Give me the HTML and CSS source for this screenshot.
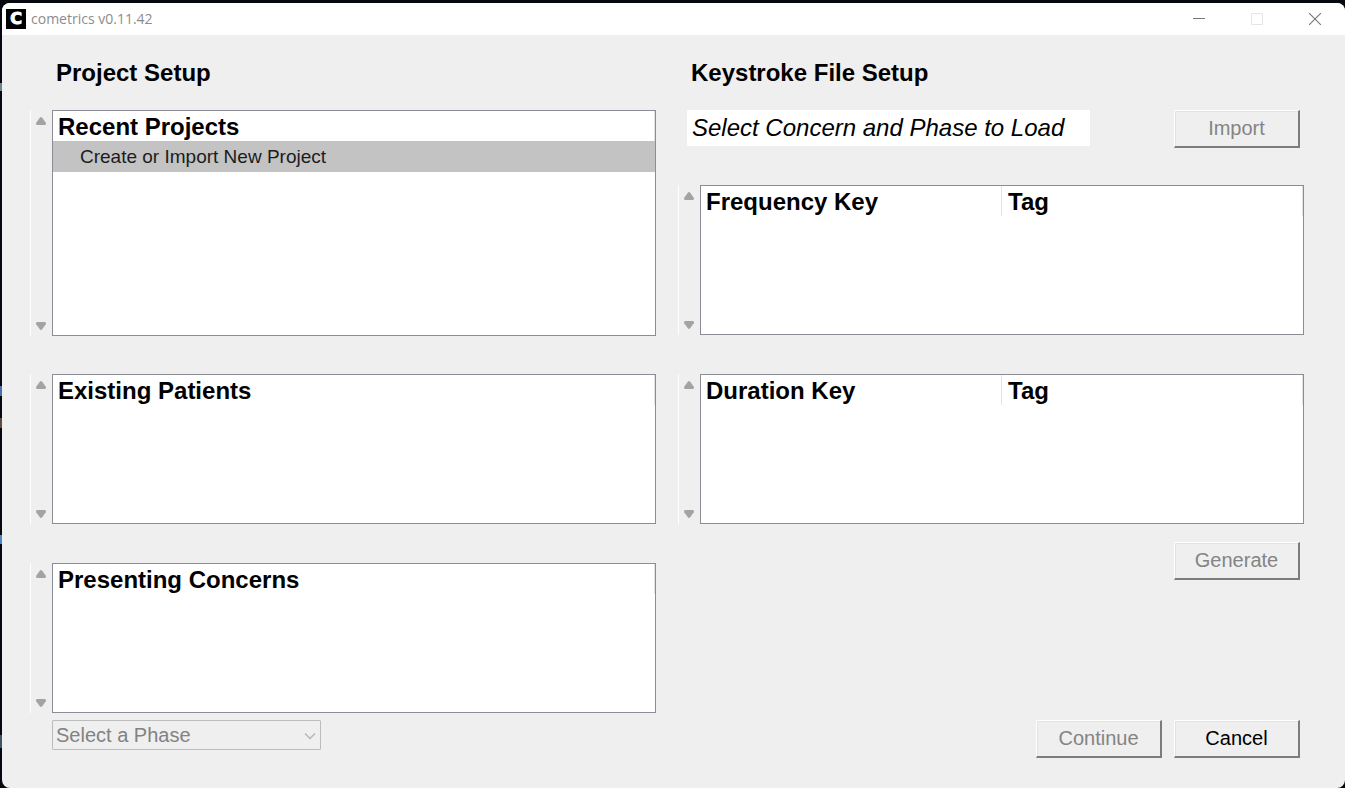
FILE: index.html
```html
<!DOCTYPE html>
<html lang="en">
<head>
<meta charset="utf-8">
<title>cometrics v0.11.42</title>
<link rel="stylesheet" href="styles.css">
</head>
<body>
<svg class="defs" aria-hidden="true">
  <symbol id="up" viewBox="0 0 10 8"><path d="M4 .5Q5-.4 6 .5L9.8 5.8Q10.4 8 8.500 8H1.500Q-.4 8 .2 5.800Z" fill="#a3a3a3"/></symbol>
  <symbol id="down" viewBox="0 0 10 8"><path d="M4 7.500Q5 8.400 6 7.500L9.800 2.200Q10.400 0 8.500 0H1.500Q-.4 0 .2 2.200Z" fill="#a3a3a3"/></symbol>
</svg>
<div class="window">
  <header class="titlebar">
    <span class="logo" aria-hidden="true">C</span>
    <span class="title">cometrics v0.11.42</span>
    <div class="controls">
      <button type="button" aria-label="Minimize"><svg width="12" height="12" viewBox="0 0 12 12"><path d="M0 5.500H12" stroke="#777"/></svg></button>
      <button type="button" aria-label="Maximize" disabled><svg width="12" height="12" viewBox="0 0 12 12"><path d="M.5.500H11.500V11.500H.5Z" fill="none" stroke="#e6e6e6"/></svg></button>
      <button type="button" aria-label="Close"><svg width="12" height="12" viewBox="0 0 12 12"><path d="M0 0L12 12M12 0L0 12" stroke="#777" stroke-width="1.100"/></svg></button>
    </div>
  </header>
  <main class="content">
    <section class="column">
      <h1 class="heading">Project Setup</h1>
      <div class="list list-tall">
        <div class="scroll"><button type="button" aria-label="Scroll projects up"><svg><use href="#up"/></svg></button><button type="button" aria-label="Scroll projects down"><svg><use href="#down"/></svg></button></div>
        <div class="box"><table>
          <thead><tr><th>Recent Projects</th></tr></thead>
          <tbody><tr class="selected"><td>Create or Import New Project</td></tr></tbody>
        </table></div>
      </div>
      <div class="list">
        <div class="scroll"><button type="button" aria-label="Scroll patients up"><svg><use href="#up"/></svg></button><button type="button" aria-label="Scroll patients down"><svg><use href="#down"/></svg></button></div>
        <div class="box"><table><thead><tr><th>Existing Patients</th></tr></thead></table></div>
      </div>
      <div class="list">
        <div class="scroll"><button type="button" aria-label="Scroll concerns up"><svg><use href="#up"/></svg></button><button type="button" aria-label="Scroll concerns down"><svg><use href="#down"/></svg></button></div>
        <div class="box"><table><thead><tr><th>Presenting Concerns</th></tr></thead></table></div>
      </div>
      <div class="phase">
        <select aria-label="Phase" disabled><option>Select a Phase</option></select>
        <svg class="chevron" width="12" height="8" viewBox="0 0 12 8" aria-hidden="true"><path d="M1 1.500L6 6.500L11 1.500" fill="none" stroke="#b4b4b4" stroke-width="1.300"/></svg>
      </div>
    </section>
    <section class="column">
      <h1 class="heading heading-right">Keystroke File Setup</h1>
      <div class="file">
        <input type="text" aria-label="Keystroke file" value="Select Concern and Phase to Load" readonly>
        <button type="button" class="btn" disabled>Import</button>
      </div>
      <div class="list">
        <div class="scroll"><button type="button" aria-label="Scroll frequency keys up"><svg><use href="#up"/></svg></button><button type="button" aria-label="Scroll frequency keys down"><svg><use href="#down"/></svg></button></div>
        <div class="box"><table><thead><tr><th>Frequency Key</th><th>Tag</th></tr></thead></table></div>
      </div>
      <div class="list">
        <div class="scroll"><button type="button" aria-label="Scroll duration keys up"><svg><use href="#up"/></svg></button><button type="button" aria-label="Scroll duration keys down"><svg><use href="#down"/></svg></button></div>
        <div class="box"><table><thead><tr><th>Duration Key</th><th>Tag</th></tr></thead></table></div>
      </div>
      <div class="actions generate"><button type="button" class="btn" disabled>Generate</button></div>
      <div class="actions bottom">
        <button type="button" class="btn" disabled>Continue</button>
        <button type="button" class="btn">Cancel</button>
      </div>
    </section>
  </main>
</div>
</body>
</html>
```
FILE: styles.css
```css
* { box-sizing: border-box; }

body {
  margin: 0;
  min-height: 100vh;
  padding: 3px 0 0 2px;
  display: flex;
  background:
    linear-gradient(#4a86c4, #4a86c4) 0 535px / 2px 9px no-repeat,
    linear-gradient(#4a6db0, #4a6db0) 0 386px / 2px 10px no-repeat,
    linear-gradient(#5d4b42, #5d4b42) 0 418px / 2px 10px no-repeat,
    linear-gradient(#3f5266, #3f5266) 0 735px / 2px 13px no-repeat,
    linear-gradient(#6b8494, #6b8494) 0 83px / 2px 8px no-repeat,
    #05080f;
  font-family: "Liberation Sans", Arial, sans-serif;
  color: #000;
}

button, input, select { font-family: inherit; }

.defs { position: absolute; width: 0; height: 0; }

.window {
  flex: 1;
  display: flex;
  flex-direction: column;
  background: #efefef;
  border-radius: 8px;
  overflow: hidden;
}

.titlebar {
  display: flex;
  align-items: center;
  height: 32px;
  padding: 0 1px 0 4px;
  background: #fff;
}

.logo {
  width: 20px;
  height: 20px;
  background: #000;
  color: #fff;
  font: bold 16px/20px "DejaVu Sans", sans-serif;
  text-align: center;
  -webkit-text-stroke: 1px #fff;
}

.title {
  margin-left: 5px;
  font: 14px/20px "Open Sans", sans-serif;
  color: #8c8c8c;
}

.controls { display: flex; margin-left: auto; }

.controls button {
  display: grid;
  place-items: center;
  width: 58px;
  height: 32px;
  padding: 0;
  border: 0;
  background: none;
}

.content {
  flex: 1;
  display: grid;
  grid-template-columns: 1fr 1fr;
  column-gap: 22px;
  padding: 20px 41px 30px 28px;
}

.column { display: flex; flex-direction: column; }

.heading {
  margin: 0 0 19px;
  padding-left: 26px;
  font-size: 24px;
  line-height: 36px;
}

.heading-right { padding-left: 13px; }

.list {
  display: grid;
  grid-template-columns: 22px 1fr;
  min-height: 150px;
}

.list-tall { min-height: 226px; }

.list + .list { margin-top: 39px; }

.list-tall + .list { margin-top: 38px; }

.scroll {
  display: flex;
  flex-direction: column;
  justify-content: space-between;
  align-items: center;
  padding: 7px 2px 6px 0;
  border-left: 1px solid #fff;
}

.scroll button {
  display: block;
  padding: 0;
  border: 0;
  background: none;
}

.scroll svg { display: block; width: 10px; height: 8px; }

.box { border: 1px solid #8a8d93; background: #fff; }

table {
  width: 100%;
  border-collapse: separate;
  border-spacing: 0;
  table-layout: fixed;
}

th {
  height: 30px;
  padding: 1px 5px 0;
  border-right: 1px solid #e3e3e3;
  font-size: 24px;
  line-height: 29px;
  text-align: left;
}

th + th { padding-left: 6px; }

td {
  height: 31px;
  padding: 0 27px;
  font-size: 19px;
  line-height: 31px;
  color: #1c1c1c;
}

.selected { background: #c3c3c3; }

.phase {
  position: relative;
  width: 269px;
  margin: 7px 0 0 22px;
}

.phase select {
  display: block;
  width: 100%;
  height: 30px;
  padding: 0 24px 0 3px;
  appearance: none;
  border: 1px solid #bcbcbc;
  border-radius: 1px;
  background: #efefef;
  color: #828282;
  font-size: 20px;
  opacity: 1;
}

.chevron { position: absolute; right: 5px; top: 12px; pointer-events: none; }

.file {
  display: flex;
  justify-content: space-between;
  align-items: flex-start;
  margin-bottom: 37px;
  padding: 0 4px 0 9px;
}

.file input {
  width: 403px;
  height: 36px;
  padding: 0 5px;
  border: 0;
  background: #fff;
  font-size: 24px;
  font-style: italic;
  color: #000;
}

.btn {
  width: 126px;
  height: 38px;
  padding: 0;
  border: 1px solid;
  border-width: 1px 2px 2px 1px;
  border-color: #fff #7c7c7c #7c7c7c #fff;
  box-shadow: inset 1px 1px #e3e3e3;
  background: #efefef;
  color: #000;
  font-size: 20px;
}

.btn:disabled { color: #848484; }

.actions {
  display: flex;
  justify-content: flex-end;
  gap: 12px;
  padding-right: 4px;
}

.generate { margin-top: 18px; }

.bottom { margin-top: auto; }
```
